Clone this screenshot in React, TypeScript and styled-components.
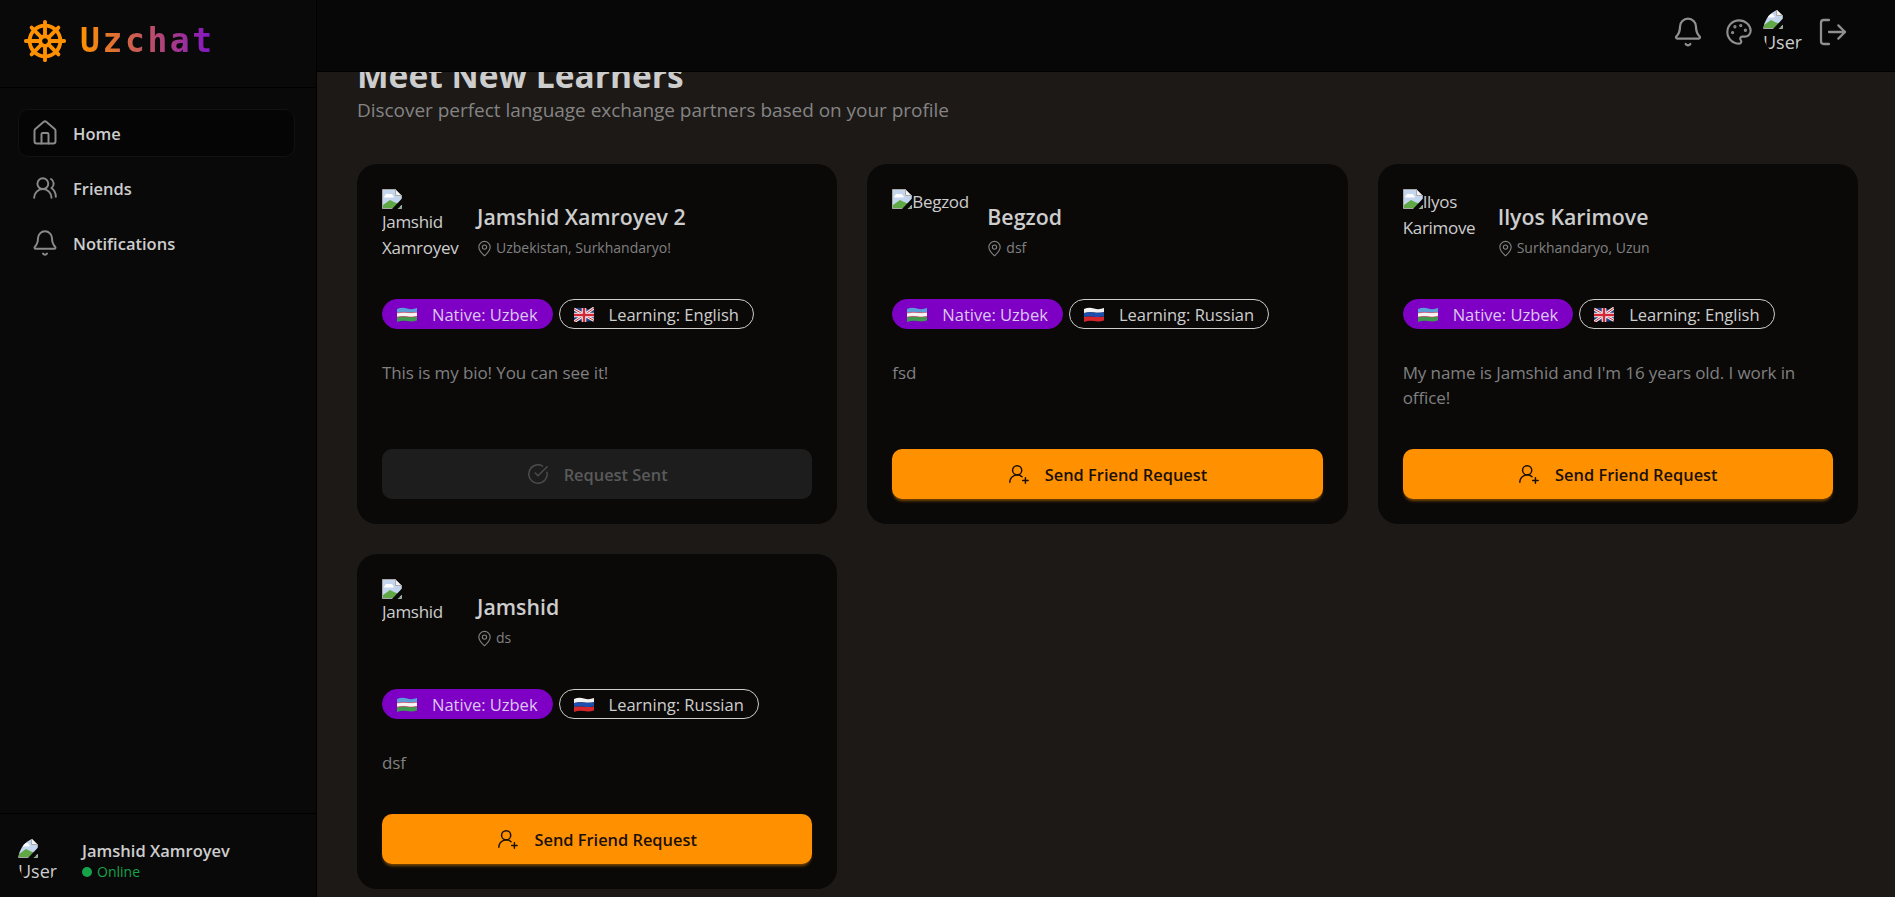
import React from 'react';
import styled, { createGlobalStyle } from 'styled-components';
import { Bell, CircleCheckBig, House, LogOut, MapPin, Palette, ShipWheel, UserRoundPlus, UsersRound } from 'lucide-react';

const FONT = '"Open Sans", "Noto Sans", "Liberation Sans", sans-serif';

const GlobalStyle = createGlobalStyle`
  html, body { margin: 0; padding: 0; height: 100%; background: #1c1917; }
  * { box-sizing: border-box; }
  body { font-family: ${FONT}; color: #cdcdcd; overflow: hidden; }
`;

type Lang = 'uz' | 'gb' | 'ru';

const learners: { name: string; alt: string; location: string; learning: string; flag: Lang; bio: string; sent?: boolean }[] = [
  { name: 'Jamshid Xamroyev 2', alt: 'Jamshid Xamroyev', location: 'Uzbekistan, Surkhandaryo!', learning: 'English', flag: 'gb', bio: 'This is my bio! You can see it!', sent: true },
  { name: 'Begzod', alt: 'Begzod', location: 'dsf', learning: 'Russian', flag: 'ru', bio: 'fsd' },
  { name: 'Ilyos Karimove', alt: 'Ilyos Karimove', location: 'Surkhandaryo, Uzun', learning: 'English', flag: 'gb', bio: "My name is Jamshid and I'm 16 years old. I work in office!" },
  { name: 'Jamshid', alt: 'Jamshid', location: 'ds', learning: 'Russian', flag: 'ru', bio: 'dsf' },
];

const BrokenIcon = () => (
  <BrokenSvg viewBox="0 0 20 20">
    <path d="M.5.500h13l6 6v13H.500z" fill="#c3d6ee" stroke="#a9a9a9" />
    <path d="M13.500.500v6h6z" fill="#f2f2f2" stroke="#a9a9a9" />
    <path d="M3 7c0-2 3-3 4-1.500C8 4.500 11 5 11 7c1 0 1.500 1 0 1.500H3C1.500 8.500 1.500 7 3 7z" fill="#fff" />
    <path d="M1 19v-3l7-5 4 2 5 2 2 4z" fill="#5fa845" />
    <path d="M20 9.500 10 20h5.500l4.500-4.500z" fill="#0a0908" />
  </BrokenSvg>
);

const Flag = ({ lang }: { lang: Lang }) => (
  <FlagSvg viewBox="0 0 20 15">
    {lang === 'uz' && (
      <>
        <path d="M0 2Q5 0 10 1.500T20 1V5.300Q15 6.300 10 5.500T0 6z" fill="#5a9fd8" />
        <path d="M0 6Q5 5 10 5.500T20 5.300V9.500Q15 10.300 10 9.700T0 10z" fill="#f5f5f5" />
        <path d="M0 10Q5 9 10 9.700T20 9.500V13.500Q15 15 10 14T0 15z" fill="#3f9a52" />
        <path d="M0 6Q5 5 10 5.500T20 5.300M0 10Q5 9 10 9.700T20 9.500" stroke="#d33" strokeWidth=".5" fill="none" />
      </>
    )}
    {lang === 'ru' && (
      <>
        <path d="M0 2Q5 0 10 1.500T20 1V5.300Q15 6.300 10 5.500T0 6z" fill="#f2f2f2" />
        <path d="M0 6Q5 5 10 5.500T20 5.300V9.500Q15 10.300 10 9.700T0 10z" fill="#1c4fb0" />
        <path d="M0 10Q5 9 10 9.700T20 9.500V13.500Q15 15 10 14T0 15z" fill="#d5262e" />
      </>
    )}
    {lang === 'gb' && (
      <>
        <path d="M0 2Q5 0 10 1.500T20 1V13.500Q15 15 10 14T0 15z" fill="#26407f" />
        <path d="M0 2 20 13.500M20 1 0 15" stroke="#f2f2f2" strokeWidth="3" />
        <path d="M0 2 20 13.500M20 1 0 15" stroke="#d3283a" strokeWidth="1" />
        <path d="M10 1v14M0 8h20" stroke="#f2f2f2" strokeWidth="4.500" />
        <path d="M10 1v14M0 8h20" stroke="#d3283a" strokeWidth="2.500" />
      </>
    )}
  </FlagSvg>
);

const LearnerCard = ({ learner }: { learner: (typeof learners)[number] }) => (
  <Card>
    <CardHead>
      <CardAvatar>
        <BrokenIcon />
        {learner.alt}
      </CardAvatar>
      <CardInfo>
        <Name>{learner.name}</Name>
        <Location>
          <MapPin size={17} strokeWidth={1.6} />
          {learner.location}
        </Location>
      </CardInfo>
    </CardHead>
    <Chips>
      <Chip $native>
        <Flag lang="uz" />
        Native: Uzbek
      </Chip>
      <Chip>
        <Flag lang={learner.flag} />
        Learning: {learner.learning}
      </Chip>
    </Chips>
    <Bio>{learner.bio}</Bio>
    {learner.sent ? (
      <ActionButton $disabled>
        <CircleCheckBig size={22} strokeWidth={1.6} />
        Request Sent
      </ActionButton>
    ) : (
      <ActionButton>
        <UserRoundPlus size={22} strokeWidth={1.6} />
        Send Friend Request
      </ActionButton>
    )}
  </Card>
);

export default function App() {
  const scrollRef = React.useRef<HTMLDivElement>(null);

  // the page was photographed a little scrolled down
  React.useLayoutEffect(() => {
    if (scrollRef.current) scrollRef.current.scrollTop = 55;
  }, []);

  return (
    <Layout>
      <GlobalStyle />
      <Sidebar>
        <LogoRow>
          <ShipWheel size={46} color="#ff9100" strokeWidth={2} />
          <LogoText>Uzchat</LogoText>
        </LogoRow>
        <Nav>
          <NavItem $active>
            <NavIcon>
              <House size={28} strokeWidth={1.7} />
            </NavIcon>
            Home
          </NavItem>
          <NavItem>
            <NavIcon>
              <UsersRound size={26} strokeWidth={1.8} />
            </NavIcon>
            Friends
          </NavItem>
          <NavItem>
            <NavIcon>
              <Bell size={28} strokeWidth={1.7} />
            </NavIcon>
            Notifications
          </NavItem>
        </Nav>
        <Profile>
          <RoundAvatar>
            <BrokenIcon />
            User
          </RoundAvatar>
          <div>
            <ProfileName>Jamshid Xamroyev</ProfileName>
            <Status>
              <StatusDot />
              Online
            </Status>
          </div>
        </Profile>
      </Sidebar>
      <Scroller ref={scrollRef}>
        <TopBar>
          <IconButton>
            <Bell size={32} strokeWidth={1.7} />
          </IconButton>
          <IconButton $left={3}>
            <Palette size={28} strokeWidth={1.8} />
          </IconButton>
          <RoundAvatar>
            <BrokenIcon />
            User
          </RoundAvatar>
          <IconButton $left={6}>
            <LogOut size={32} strokeWidth={1.7} />
          </IconButton>
        </TopBar>
        <Content>
          <Title>Meet New Learners</Title>
          <Subtitle>Discover perfect language exchange partners based on your profile</Subtitle>
          <CardGrid>
            {learners.map((l) => (
              <LearnerCard key={l.name} learner={l} />
            ))}
          </CardGrid>
        </Content>
      </Scroller>
    </Layout>
  );
}

const Layout = styled.div`
  display: flex;
  height: 897px;
  overflow: hidden;
`;

const Sidebar = styled.aside`
  width: 317px;
  flex-shrink: 0;
  display: flex;
  flex-direction: column;
  background: #090909;
  border-right: 1px solid #000;
`;

const LogoRow = styled.div`
  height: 88px;
  display: flex;
  align-items: center;
  gap: 12px;
  padding: 0 0 6px 22px;
  border-bottom: 1px solid #000;
`;

const LogoText = styled.span`
  font-family: "DejaVu Sans Mono", "Liberation Mono", monospace;
  font-size: 33px;
  font-weight: 700;
  letter-spacing: 2.600px;
  background: linear-gradient(90deg, #ff9100, #7e12c9);
  -webkit-background-clip: text;
  background-clip: text;
  color: transparent;
`;

const Nav = styled.nav`
  flex: 1;
  display: flex;
  flex-direction: column;
  gap: 7px;
  padding: 21px 21px 0 18px;
`;

const NavItem = styled.a<{ $active?: boolean }>`
  height: 48px;
  display: flex;
  align-items: center;
  gap: 14px;
  padding-left: 12px;
  border-radius: 10px;
  font-size: 16.500px;
  font-weight: 600;
  color: #cdcdcd;
  background: ${(p) => (p.$active ? '#050505' : 'transparent')};
  border: 1px solid ${(p) => (p.$active ? '#121212' : 'transparent')};
`;

const NavIcon = styled.span`
  width: 28px;
  display: flex;
  justify-content: center;
  color: #8a8a8a;
`;

const Profile = styled.div`
  height: 84px;
  display: flex;
  align-items: center;
  gap: 24px;
  padding: 10px 0 0 18px;
  border-top: 1px solid #000;
`;

const BrokenSvg = styled.svg`
  float: left;
  width: 20px;
  height: 20px;
`;

const RoundAvatar = styled.div`
  width: 40px;
  height: 46px;
  flex-shrink: 0;
  border-radius: 50%;
  overflow: hidden;
  font-size: 18px;
  line-height: 26px;
  color: #cdcdcd;
`;

const ProfileName = styled.div`
  font-size: 16.500px;
  font-weight: 600;
  line-height: 22px;
`;

const Status = styled.div`
  display: flex;
  align-items: center;
  gap: 5px;
  font-size: 14px;
  line-height: 20px;
  color: #16a34a;
`;

const StatusDot = styled.span`
  width: 10px;
  height: 10px;
  border-radius: 50%;
  background: #16a34a;
`;

const Scroller = styled.main`
  flex: 1;
  min-width: 0;
  height: 897px;
  overflow-y: auto;
  scrollbar-width: none;
`;

const TopBar = styled.header`
  position: sticky;
  top: 0;
  z-index: 2;
  height: 72px;
  display: flex;
  align-items: center;
  justify-content: flex-end;
  padding: 0 38px 7px 0;
  background: #070707;
  border-bottom: 1px solid #000;
`;

const IconButton = styled.button<{ $left?: number }>`
  width: 48px;
  height: 48px;
  display: flex;
  align-items: center;
  justify-content: center;
  margin-left: ${(p) => p.$left ?? 0}px;
  padding: 0;
  border: 0;
  background: none;
  color: #8f8f8f;
`;

const Content = styled.div`
  padding: 40px 37px 60px 40px;
`;

const Title = styled.h1`
  margin: 0;
  font-size: 33.500px;
  line-height: 36px;
  font-weight: 700;
  color: #cdcdcd;
`;

const Subtitle = styled.p`
  margin: 5px 0 42px;
  font-size: 19px;
  line-height: 24px;
  letter-spacing: -0.030px;
  color: #858483;
`;

const CardGrid = styled.div`
  display: grid;
  grid-template-columns: repeat(3, 1fr);
  gap: 30px;
`;

const Card = styled.article`
  display: flex;
  flex-direction: column;
  padding: 25px;
  border-radius: 20px;
  background: #0a0908;
`;

const CardHead = styled.div`
  display: flex;
  align-items: center;
  gap: 18px;
`;

const CardAvatar = styled.div`
  width: 77px;
  height: 77px;
  flex-shrink: 0;
  overflow: hidden;
  font-size: 17px;
  line-height: 26px;
  letter-spacing: -0.300px;
  color: #cdcdcd;
`;

const CardInfo = styled.div`
  margin-top: 5px;
`;

const Name = styled.h3`
  margin: 0 0 6px;
  font-size: 21.300px;
  line-height: 30px;
  font-weight: 600;
  color: #cdcdcd;
`;

const Location = styled.div`
  display: flex;
  align-items: center;
  gap: 3px;
  margin-left: -1px;
  font-size: 14px;
  line-height: 20px;
  color: #808080;
`;

const Chips = styled.div`
  display: flex;
  gap: 6px;
  margin-top: 33px;
`;

const Chip = styled.span<{ $native?: boolean }>`
  height: 30px;
  display: inline-flex;
  align-items: center;
  gap: 15px;
  padding: 0 14px;
  border-radius: 15px;
  font-size: 16.500px;
  background: ${(p) => (p.$native ? '#7e00c5' : 'transparent')};
  color: ${(p) => (p.$native ? '#dcc6f0' : '#cdcdcd')};
  border: 1px solid ${(p) => (p.$native ? '#7e00c5' : '#cdcdcd')};
`;

const FlagSvg = styled.svg`
  width: 20px;
  height: 15px;
  flex-shrink: 0;
`;

const Bio = styled.p`
  flex: 1;
  margin: 31px 0 39px;
  font-size: 17px;
  line-height: 25px;
  letter-spacing: -0.100px;
  color: #808080;
`;

const ActionButton = styled.button<{ $disabled?: boolean }>`
  height: 50px;
  width: 100%;
  flex-shrink: 0;
  display: flex;
  align-items: center;
  justify-content: center;
  gap: 15px;
  border: 0;
  border-radius: 10px;
  font-family: ${FONT};
  font-size: 16.400px;
  font-weight: 600;
  background: ${(p) => (p.$disabled ? '#1d1d1d' : '#ff9100')};
  color: ${(p) => (p.$disabled ? '#5a5a5a' : '#1a1008')};
  box-shadow: ${(p) => (p.$disabled ? 'none' : '0 3px 3px -1px rgba(255, 145, 0, 0.45)')};

  svg {
    color: ${(p) => (p.$disabled ? '#4c4c4c' : '#1a1008')};
  }
`;
